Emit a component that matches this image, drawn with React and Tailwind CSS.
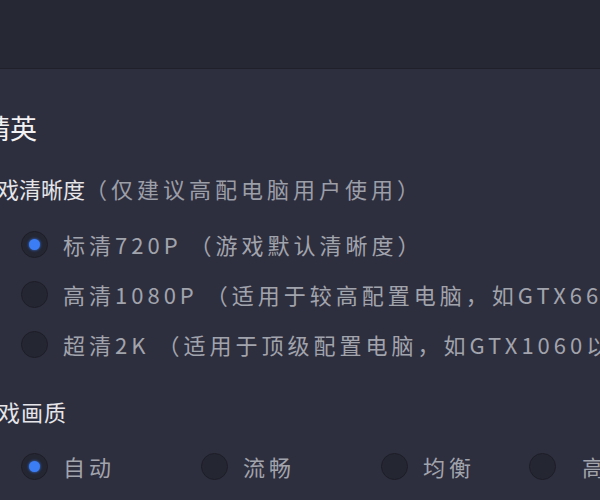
import React from "react";

const resolutions = [
  { label: "标清720P", note: "（游戏默认清晰度）", checked: true },
  { label: "高清1080P", note: "（适用于较高配置电脑，如GTX660以上显卡）", checked: false },
  { label: "超清2K", note: "（适用于顶级配置电脑，如GTX1060以上显卡）", checked: false },
];

const qualities = [
  { label: "自动", checked: true, width: "w-[180px]", gap: "gap-[15px]" },
  { label: "流畅", checked: false, width: "w-[180px]", gap: "gap-[15px]" },
  { label: "均衡", checked: false, width: "w-[148px]", gap: "gap-[15px]" },
  { label: "高清", checked: false, width: "w-[120px]", gap: "gap-[26px]" },
];

const Radio = ({ checked }) => (
  <span className="flex h-[27px] w-[27px] shrink-0 items-center justify-center rounded-full border border-[#1c1d26] bg-[#242632]">
    {checked && <span className="h-[11px] w-[11px] rounded-full bg-[#3b7df5] shadow-[0_0_3px_#3b7df5]" />}
  </span>
);

const App = () => {
  return (
    <div className="h-[500px] w-[600px] overflow-hidden bg-[#2e2f3e] font-['Noto_Sans_CJK_SC',sans-serif]">
      <div className="h-[69px] border-b border-[#1f2029] bg-[#262834]" />

      <div className="ml-[-25px] pt-[41px]">
        <h1 className="ml-[-46px] whitespace-nowrap text-[27px] leading-[36px] text-[#f2f2f4]">和平精英</h1>

        <div className="mt-[27px] whitespace-nowrap text-[22px] leading-[30px] text-[#e6e6ea]">
          游戏清晰度<span className="tracking-[4px] text-[#9c9ea8]">（仅建议高配电脑用户使用）</span>
        </div>

        <div className="mt-[16px] flex flex-col pl-[46px]">
          {resolutions.map((r) => (
            <div key={r.label} className="flex h-[50px] items-center gap-[15px] whitespace-nowrap">
              <Radio checked={r.checked} />
              <span className="text-[22px] tracking-[4px] text-[#a2a4ad]">
                {r.label}
                <span className="ml-[8px]">{r.note}</span>
              </span>
            </div>
          ))}
        </div>

        <div className="mt-[27px] whitespace-nowrap text-[22px] leading-[30px] tracking-[1px] text-[#e6e6ea]">游戏画质</div>

        <div className="mt-[15px] flex h-[50px] items-center pl-[46px]">
          {qualities.map((q) => (
            <div key={q.label} className={`flex shrink-0 items-center ${q.width} ${q.gap}`}>
              <Radio checked={q.checked} />
              <span className="whitespace-nowrap text-[22px] tracking-[4px] text-[#a2a4ad]">{q.label}</span>
            </div>
          ))}
        </div>
      </div>
    </div>
  );
};

export default App;
